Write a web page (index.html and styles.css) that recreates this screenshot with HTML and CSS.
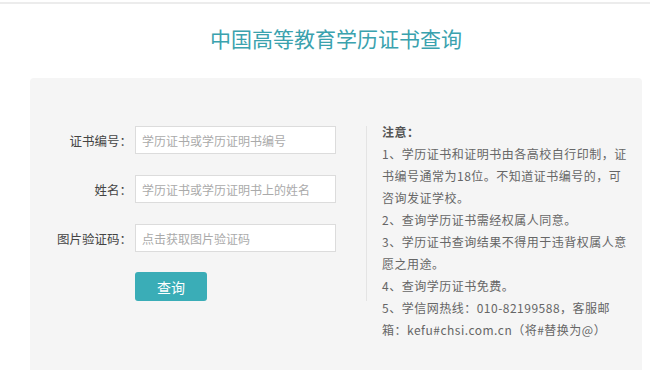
FILE: index.html
```html
<!DOCTYPE html>
<html lang="zh-CN">
<head>
  <meta charset="UTF-8" />
  <meta name="viewport" content="width=device-width, initial-scale=1.0"/>
  <title>中国高等教育学历证书查询</title>
  <link rel="stylesheet" href="styles.css">
</head>
<body>
  <div class="topbar"></div>

  <h1 class="page-title">中国高等教育学历证书查询</h1>

  <div class="panel">
    <!-- 查询表单 -->
    <form class="query-form" onsubmit="return false;">
      <div class="form-row">
        <label for="certNo">证书编号：</label>
        <input type="text" id="certNo" placeholder="学历证书或学历证明书编号">
      </div>
      <div class="form-row">
        <label for="userName">姓名：</label>
        <input type="text" id="userName" placeholder="学历证书或学历证明书上的姓名">
      </div>
      <div class="form-row">
        <label for="captcha">图片验证码：</label>
        <input type="text" id="captcha" placeholder="点击获取图片验证码">
      </div>
      <div class="form-actions">
        <button class="query-btn" type="submit">查询</button>
      </div>
    </form>

    <!-- 注意事项 -->
    <div class="notes">
      <p class="notes-title">注意：</p>
      <p>1、学历证书和证明书由各高校自行印制，证<br>书编号通常为18位。不知道证书编号的，可<br>咨询发证学校。</p>
      <p>2、查询学历证书需经权属人同意。</p>
      <p>3、学历证书查询结果不得用于违背权属人意<br>愿之用途。</p>
      <p>4、查询学历证书免费。</p>
      <p>5、学信网热线：010-82199588，客服邮<br>箱：kefu#chsi.com.cn（将#替换为@）</p>
    </div>
  </div>
</body>
</html>
```

FILE: styles.css
```css
body {
  margin: 0;
  padding: 0;
  font-family: "Noto Sans CJK SC", "Liberation Sans", sans-serif;
  background: #fff;
  color: #333;
}

.topbar {
  height: 2px;
  margin-top: 2px;
  background: #ececec;
}

.page-title {
  margin: 0 8px 25px 30px;
  padding-top: 19px;
  text-align: center;
  font-size: 21px;
  line-height: 30px;
  font-weight: normal;
  color: #3aa2ae;
}

.panel {
  display: flex;
  align-items: flex-start;
  margin: 0 8px 0 30px;
  padding: 43px 0 40px;
  background: #f5f5f5;
  border-radius: 4px;
}

.query-form {
  width: 336px;
  margin-top: 5px;
  border-right: 1px solid #e4e4e4;
}

.form-row {
  display: flex;
  align-items: center;
  margin-bottom: 21px;
}

.form-row label {
  width: 102px;
  text-align: right;
  font-family: "Noto Sans CJK TC", "Noto Sans CJK SC", sans-serif;
  font-size: 12.5px;
  color: #444;
}

.form-row input {
  box-sizing: border-box;
  width: 201px;
  height: 28px;
  margin-left: 3px;
  padding: 0 6px;
  border: 1px solid #dcdcdc;
  background: #fff;
  font-family: inherit;
  font-size: 12px;
  outline: none;
}

.form-row input::placeholder {
  color: #aaa;
}

.form-actions {
  padding-left: 105px;
  margin-top: -1px;
}

.query-btn {
  width: 72px;
  height: 29px;
  border: none;
  border-radius: 3px;
  background: #3aadb7;
  color: #fff;
  font-family: inherit;
  font-size: 14px;
  cursor: pointer;
}

.notes {
  padding-left: 15px;
  font-size: 12px;
  line-height: 22px;
  letter-spacing: 0.5px;
  color: #666;
  white-space: nowrap;
}

.notes p {
  margin: 0;
}

.notes-title {
  font-weight: bold;
  color: #555;
}
```
